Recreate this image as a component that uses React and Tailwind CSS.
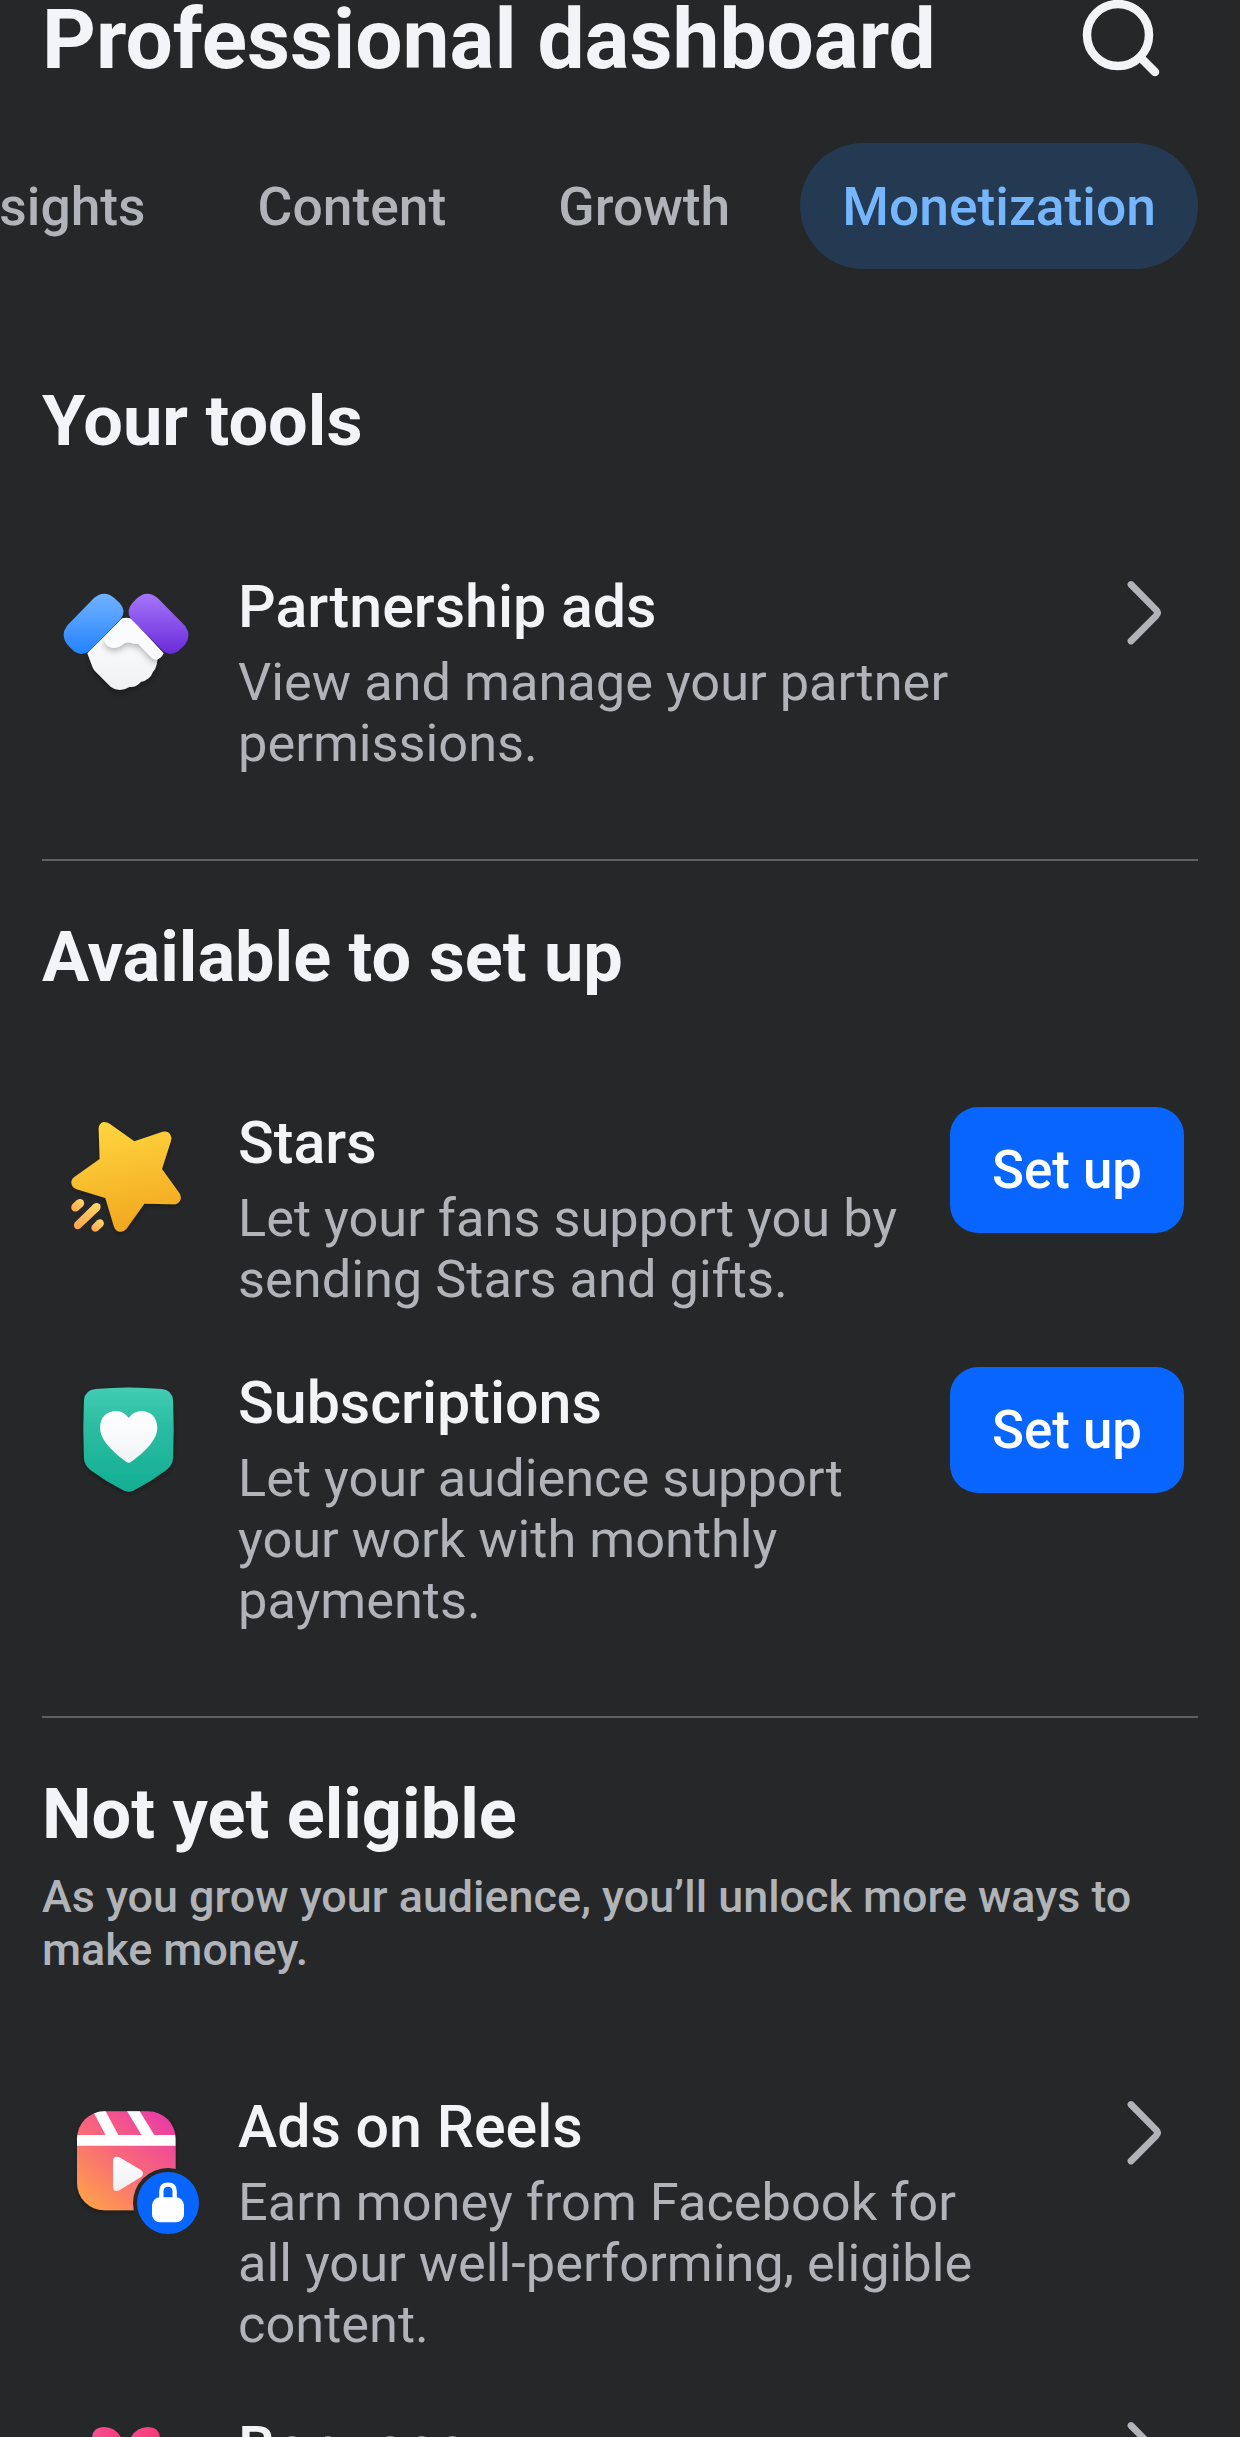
const TABS = ["Insights", "Content", "Growth", "Monetization"];

export default function App() {
  return (
    <div className="w-[1240px] h-[2437px] overflow-hidden bg-[#252728] text-[#f2f4f7] font-['Roboto',sans-serif]">
      <header className="flex justify-between h-[143px] pl-[42px] pr-[76px]">
        <h1 className="text-[83.8px] leading-[78px] font-bold whitespace-nowrap">
          Professional dashboard
        </h1>
        <SearchIcon />
      </header>

      {/* Tabs */}
      <nav className="flex justify-end gap-[28px] h-[126px] pr-[42px]">
        {TABS.map((tab) => (
          <Tab key={tab} text={tab} active={tab === "Monetization"} />
        ))}
      </nav>

      <main className="px-[42px]">
        <section className="pt-[110px]">
          <SectionTitle text="Your tools" />
          <div className="mt-[109px]">
            <ToolRow
              icon={<PartnershipIcon />}
              title="Partnership ads"
              lines={["View and manage your partner", "permissions."]}
            />
          </div>
        </section>

        <hr className="mt-[85px] border-t-2 border-[#5e6063]" />

        <section className="pt-[54px]">
          <SectionTitle text="Available to set up" />
          <div className="mt-[109px] space-y-[58px]">
            <ToolRow
              icon={<StarsIcon />}
              title="Stars"
              lines={["Let your fans support you by", "sending Stars and gifts."]}
              setup
            />
            <ToolRow
              icon={<SubscriptionsIcon />}
              title="Subscriptions"
              lines={["Let your audience support", "your work with monthly", "payments."]}
              setup
            />
          </div>
        </section>

        <hr className="mt-[85px] border-t-2 border-[#5e6063]" />

        <section className="pt-[54px]">
          <SectionTitle text="Not yet eligible" />
          <p className="mt-[14px] text-[44.85px] leading-[53px] font-medium text-[#b0b3b8]">
            As you grow your audience, you’ll unlock more ways to
            <br />
            make money.
          </p>
          <div className="mt-[116px] space-y-[58px]">
            <ToolRow
              icon={<ReelsIcon />}
              title="Ads on Reels"
              lines={["Earn money from Facebook for", "all your well-performing, eligible", "content."]}
            />
            <ToolRow icon={<BonusIcon />} title="Bonuses" lines={[]} />
          </div>
        </section>
      </main>
    </div>
  );
}

/* ------------------ Components ------------------ */

const Tab = ({ text, active }) => (
  <button
    className={`flex shrink-0 items-center rounded-full px-[42px] pt-[2px] text-[53.4px] font-medium ${
      active ? "bg-[#243a52] text-[#75b6ff]" : "text-[#b0b3b8]"
    }`}
  >
    {text}
  </button>
);

const SectionTitle = ({ text }) => (
  <h2 className="text-[70.3px] leading-[84px] font-bold">{text}</h2>
);

const ToolRow = ({ icon, title, lines, setup }) => (
  <div className="flex items-start">
    <div className="ml-[8px] mr-[28px] h-[140px] w-[160px] shrink-0">{icon}</div>
    <div className="flex-1 whitespace-nowrap">
      <h3 className="text-[59.1px] leading-[70px] font-medium">{title}</h3>
      <p className="mt-[10px] text-[52.35px] leading-[61px] text-[#b0b3b8]">
        {lines.map((line) => (
          <span key={line} className="block">
            {line}
          </span>
        ))}
      </p>
    </div>
    {setup ? (
      <button className="-mt-px mr-[14px] h-[126px] w-[234px] rounded-[28px] bg-[#0866ff] pt-[2px] text-[52.8px] font-medium text-white">
        Set up
      </button>
    ) : (
      <ChevronIcon />
    )}
  </div>
);

/* ------------------ Icons ------------------ */

const SearchIcon = () => (
  <svg className="h-[80px] w-[84px]" viewBox="0 0 84 80" fill="none" stroke="#f2f4f7" strokeLinecap="round">
    <circle cx="38" cy="35" r="31" strokeWidth="8.5" />
    <path d="M61 58 L75 72" strokeWidth="8.5" />
  </svg>
);

const ChevronIcon = () => (
  <svg className="mr-[36px] mt-[6px] h-[70px] w-[40px]" viewBox="0 0 40 70" fill="none">
    <path
      d="M9 6.5 L34 31.8 Q37 34.8 34 37.8 L9 63"
      stroke="#b0b3b8"
      strokeWidth="6.8"
      strokeLinecap="round"
      strokeLinejoin="round"
    />
  </svg>
);

const PartnershipIcon = () => (
  <svg className="-mt-[2px] h-[140px] w-[160px] overflow-visible" viewBox="0 0 480 420">
    <defs>
      <linearGradient id="armBlue" x1="0" y1="0" x2="0" y2="1">
        <stop offset="0" stopColor="#72b2ff" />
        <stop offset="1" stopColor="#2483ff" />
      </linearGradient>
      <linearGradient id="armPurple" x1="0" y1="0" x2="0" y2="1">
        <stop offset="0" stopColor="#a575fb" />
        <stop offset="1" stopColor="#6a2bd9" />
      </linearGradient>
      <linearGradient id="hand" x1="0" y1="0" x2="0" y2="1">
        <stop offset="0" stopColor="#ffffff" />
        <stop offset="1" stopColor="#f0f1f4" />
      </linearGradient>
      <filter id="handShadow" x="-30%" y="-30%" width="160%" height="160%">
        <feDropShadow dx="0" dy="10" stdDeviation="10" floodOpacity="0.28" />
      </filter>
      <clipPath id="handClip">
        <path d="M215 146 Q240 140 262 165 L322 250 Q325 290 309 305 Q300 330 273 335 Q258 353 238 351 Q208 370 182 350 L134 302 Q122 280 112 250 Z" />
      </clipPath>
    </defs>
    <path
      d="M215 146 Q240 140 262 165 L322 250 Q325 290 309 305 Q300 330 273 335 Q258 353 238 351 Q208 370 182 350 L134 302 Q128 294 124 282 L112 250 Z"
      fill="url(#hand)"
      filter="url(#handShadow)"
    />
    <g clipPath="url(#handClip)">
      <path
        d="M215 146 Q228 141 245 146 L341 250 Q334 266 320 269 Q311 268 304 262 L266 222 Q248 221 234 216 Q222 218 214 226 Q198 237 180 231 Q165 224 162 205 Z"
        fill="#f8f9fb"
        filter="url(#handShadow)"
      />
    </g>
    <path
      d="M215 146 Q228 141 245 146 L341 250 Q334 266 320 269 Q311 268 304 262 L266 222 Q248 221 234 216 Q222 218 214 226 Q198 237 180 231 Q165 224 162 205 Z"
      fill="#fafbfc"
    />
    <path
      d="M132 84 Q163 58 193 84 L209 99 Q231 124 212 147 L118 243 Q96 260 72 244 L52 224 Q30 196 51 167 Z"
      fill="url(#armBlue)"
    />
    <path
      d="M323 84 Q292 58 262 84 L247 99 Q226 124 243 147 L339 243 Q360 260 384 244 L405 224 Q426 196 405 167 Z"
      fill="url(#armPurple)"
    />
  </svg>
);

const StarsIcon = () => (
  <svg className="-mt-[8px] h-[150px] w-[160px] overflow-visible" viewBox="0 0 480 450">
    <defs>
      <linearGradient id="star" x1="0.4" y1="0" x2="0.6" y2="1">
        <stop offset="0" stopColor="#ffd53e" />
        <stop offset="1" stopColor="#f1a61f" />
      </linearGradient>
      <linearGradient id="trail" x1="1" y1="0" x2="0" y2="1">
        <stop offset="0" stopColor="#ffdd66" />
        <stop offset="1" stopColor="#ff9f4f" />
      </linearGradient>
      <filter id="starShadow" x="-20%" y="-20%" width="140%" height="140%">
        <feDropShadow dx="0" dy="6" stdDeviation="8" floodOpacity="0.3" />
      </filter>
    </defs>
    <path
      d="M179 71 L253 124 L338 95 Q354 92 361 104 Q366 112 363 122 L336 207 L388 279 Q396 292 390 302 Q384 313 370 313 L283 311 L229 387 Q221 396 209 395 Q197 393 192 380 L166 294 L80 268 Q66 263 64 249 Q63 239 73 231 L149 177 L146 88 Q146 70 160 66 Q170 65 179 71 Z"
      fill="url(#star)"
      filter="url(#starShadow)"
    />
    <g fill="url(#trail)">
      <path d="M80 301 Q91 293 99 301 Q106 309 99 319 L84 332 Q73 338 66 330 Q61 322 67 313 Z" />
      <path d="M131 312 Q141 305 149 313 Q155 321 148 331 L91 385 Q81 391 74 383 Q69 376 75 367 Z" />
      <path d="M142 361 Q152 354 159 362 Q165 370 158 379 L143 393 Q132 399 126 390 Q121 382 128 374 Z" />
    </g>
  </svg>
);

const SubscriptionsIcon = () => (
  <svg className="mt-[2px] h-[140px] w-[160px] overflow-visible" viewBox="0 0 480 420">
    <defs>
      <linearGradient id="badge" x1="0" y1="0" x2="0" y2="1">
        <stop offset="0" stopColor="#41cdb4" />
        <stop offset="0.35" stopColor="#2cbda2" />
        <stop offset="1" stopColor="#12af93" />
      </linearGradient>
      <linearGradient id="heart" x1="0" y1="0" x2="0" y2="1">
        <stop offset="0" stopColor="#ffffff" />
        <stop offset="1" stopColor="#f1f3f6" />
      </linearGradient>
      <filter id="badgeShadow" x="-20%" y="-20%" width="140%" height="140%">
        <feDropShadow dx="0" dy="6" stdDeviation="8" floodOpacity="0.35" />
      </filter>
    </defs>
    <path
      d="M137 57 Q236 48 335 57 Q366 60 369 90 Q373 175 369 266 Q367 285 350 299 Q302 335 252 361 Q236 369 220 361 Q169 335 120 299 Q104 285 102 266 Q98 175 102 90 Q105 60 137 57 Z"
      fill="url(#badge)"
      filter="url(#badgeShadow)"
    />
    <path
      d="M236 144 Q221 123 197 123 Q152 126 150 173 Q150 218 228 275 Q236 281 244 275 Q322 218 322 173 Q319 126 275 123 Q251 123 236 144 Z"
      fill="url(#heart)"
    />
  </svg>
);

const ReelsIcon = () => (
  <svg className="-mt-[2px] h-[160px] w-[160px] overflow-visible" viewBox="0 0 480 480">
    <defs>
      <linearGradient id="reels" x1="0.1" y1="1" x2="0.9" y2="0">
        <stop offset="0" stopColor="#ffa347" />
        <stop offset="0.5" stopColor="#f8677a" />
        <stop offset="1" stopColor="#e93aa9" />
      </linearGradient>
      <linearGradient id="play" x1="0" y1="0" x2="0" y2="1">
        <stop offset="0" stopColor="#ffffff" />
        <stop offset="1" stopColor="#f0eef2" />
      </linearGradient>
      <filter id="reelsShadow" x="-20%" y="-20%" width="140%" height="140%">
        <feDropShadow dx="0" dy="6" stdDeviation="8" floodOpacity="0.3" />
      </filter>
      <clipPath id="reelsClip">
        <rect x="81" y="64" width="296" height="297" rx="82" />
      </clipPath>
    </defs>
    <rect x="81" y="64" width="296" height="297" rx="82" fill="url(#reels)" filter="url(#reelsShadow)" />
    <g clipPath="url(#reelsClip)" fill="#fff">
      <path d="M81 135 H377 V167 H81 Z" />
      <path d="M127 60 H165 L206 137 H168 Z" />
      <path d="M229 60 H267 L314 137 H276 Z" />
    </g>
    <path
      d="M189 213 Q190 195 208 202 L273 240 Q285 250 273 261 L208 301 Q190 308 189 291 Z"
      fill="url(#play)"
    />
    {/* Lock badge */}
    <circle cx="354" cy="339" r="105" fill="#252728" />
    <circle cx="354" cy="339" r="93" fill="#0866ff" />
    <path d="M334 326 V304 Q334 284 354 284 Q374 284 374 304 V326" fill="none" stroke="#fff" strokeWidth="13" />
    <rect x="306" y="322" width="96" height="75" rx="24" fill="#fff" />
  </svg>
);

const BonusIcon = () => (
  <svg className="h-[140px] w-[160px] overflow-visible" viewBox="0 0 160 140">
    <defs>
      <linearGradient id="bow" x1="0" y1="0" x2="1" y2="0.4">
        <stop offset="0" stopColor="#f9509a" />
        <stop offset="1" stopColor="#f2386f" />
      </linearGradient>
    </defs>
    <path d="M42 26 Q42 14 54 14 Q66 14 72 26 L78 46 H52 Q42 40 42 26 Z" fill="url(#bow)" />
    <path d="M110 26 Q110 14 98 14 Q86 14 80 26 L74 46 H100 Q110 40 110 26 Z" fill="url(#bow)" />
  </svg>
);
